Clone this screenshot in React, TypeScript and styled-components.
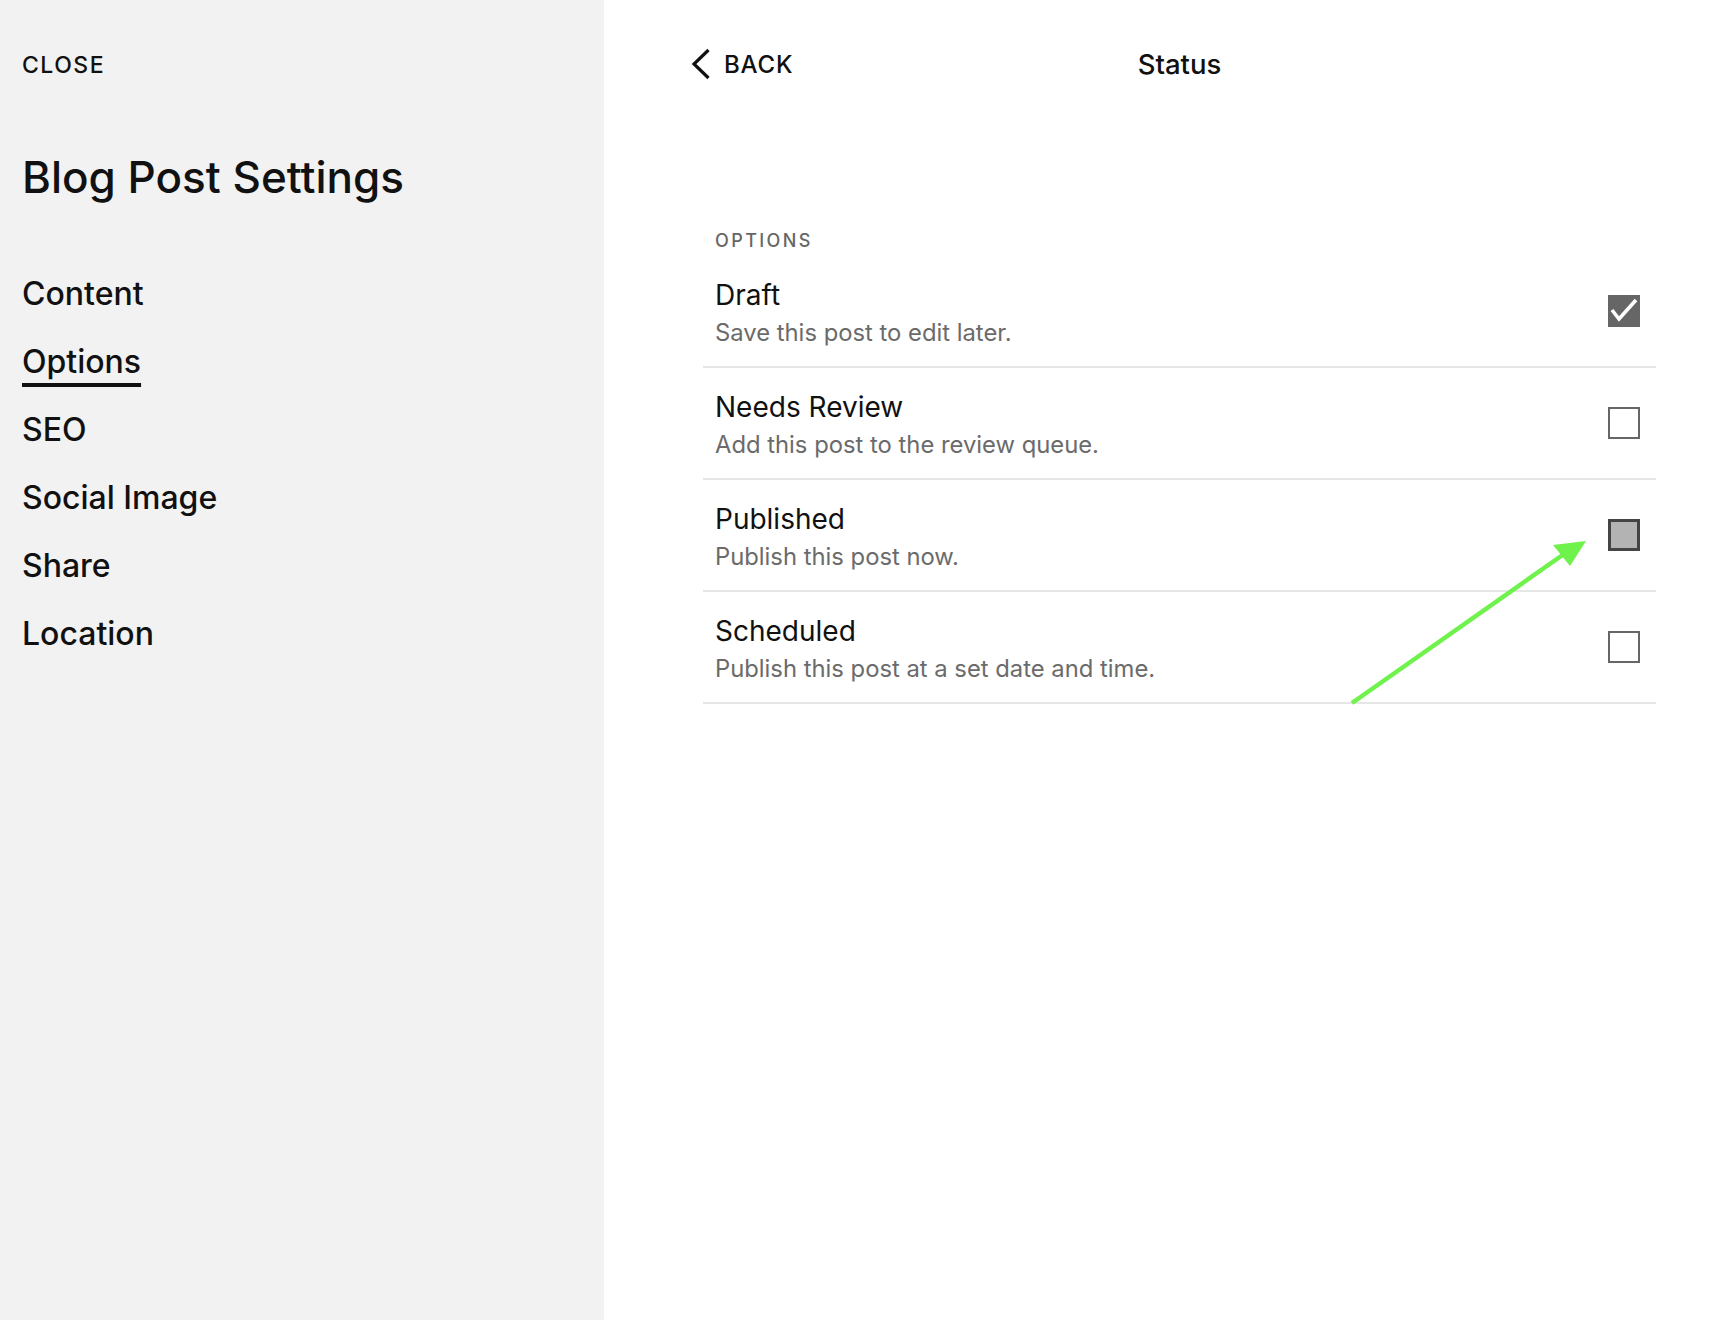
import React from "react";
import styled, { createGlobalStyle } from "styled-components";

const GlobalStyle = createGlobalStyle`
  html, body { margin: 0; padding: 0; background: #ffffff; }
  body { font-family: Inter, "Liberation Sans", Arial, sans-serif; color: #111111; -webkit-font-smoothing: antialiased; }
  * { box-sizing: border-box; }
`;

const Page = styled.div`
  display: flex;
  min-height: 1320px;
  width: 100%;
`;

const Sidebar = styled.aside`
  width: 604px;
  flex: 0 0 604px;
  background: #f2f2f2;
  padding: 54px 22px 0 22px;
  display: flex;
  flex-direction: column;
`;

const CloseLink = styled.div`
  font-size: 23px;
  line-height: 23px;
  font-weight: 500;
  letter-spacing: 1.5px;
  color: #111;
`;

const SidebarTitle = styled.h1`
  margin: 78px 0 0 0;
  font-size: 44px;
  line-height: 44px;
  font-weight: 500;
  letter-spacing: 0;
  color: #111;
`;

const Nav = styled.nav`
  margin-top: 77px;
  display: flex;
  flex-direction: column;
  align-items: flex-start;
  gap: 32px;
`;

const NavItem = styled.div<{ $active?: boolean }>`
  font-size: 32px;
  line-height: 36px;
  font-weight: 500;
  color: #111;
  text-decoration: ${(p) => (p.$active ? "underline" : "none")};
  text-decoration-thickness: 4px;
  text-underline-offset: 10px;
`;

const Main = styled.main`
  position: relative;
  flex: 1;
  background: #fff;
  display: flex;
  flex-direction: column;
`;

const Header = styled.header`
  display: grid;
  grid-template-columns: 1fr auto 1fr;
  align-items: center;
  height: 40px;
  margin-top: 44px;
  padding: 0 42px 0 87px;
`;

const BackButton = styled.div`
  display: flex;
  align-items: center;
  gap: 13px;
  font-size: 24px;
  font-weight: 500;
  letter-spacing: 0.8px;
  color: #111;
`;

const HeaderTitle = styled.div`
  font-size: 27.5px;
  font-weight: 500;
  color: #111;
`;

const Content = styled.section`
  padding: 147px 54px 0 99px;
  display: flex;
  flex-direction: column;
`;

const SectionLabel = styled.div`
  padding-left: 12px;
  font-size: 18px;
  line-height: 20px;
  font-weight: 500;
  letter-spacing: 2.4px;
  color: #666;
  margin-bottom: 5px;
`;

const Row = styled.div`
  display: flex;
  align-items: center;
  justify-content: space-between;
  height: 112px;
  padding: 0 16px 0 12px;
  border-bottom: 2px solid #e6e6e6;
`;

const RowText = styled.div`
  display: flex;
  flex-direction: column;
  gap: 6px;
  padding-top: 4px;
`;

const RowTitle = styled.div`
  font-size: 28px;
  line-height: 34px;
  font-weight: 400;
  color: #111;
`;

const RowDesc = styled.div`
  font-size: 23.8px;
  line-height: 30px;
  font-weight: 400;
  color: #6b6b6b;
`;

type BoxState = "checked" | "empty" | "pressed";

const Box = styled.div<{ $state: BoxState }>`
  width: 32px;
  height: 32px;
  flex: 0 0 32px;
  display: flex;
  align-items: center;
  justify-content: center;
  background: ${(p) =>
    p.$state === "checked" ? "#666666" : p.$state === "pressed" ? "#b3b3b3" : "#ffffff"};
  border: ${(p) =>
    p.$state === "checked"
      ? "none"
      : p.$state === "pressed"
      ? "3px solid #444444"
      : "2px solid #666666"};
`;

const ArrowOverlay = styled.svg`
  position: absolute;
  left: 736px;
  top: 530px;
  pointer-events: none;
`;

const Chevron = () => (
  <svg width="20" height="32" viewBox="0 0 20 32" fill="none">
    <path d="M17.5 2 L3 16 L17.5 30" stroke="#111" strokeWidth="3.2" strokeLinecap="butt" strokeLinejoin="miter" />
  </svg>
);

const Check = () => (
  <svg width="32" height="32" viewBox="0 0 32 32" fill="none">
    <path d="M4 15 L11 24 L28 5" stroke="#fff" strokeWidth="3.6" strokeLinecap="butt" strokeLinejoin="miter" />
  </svg>
);

const options: { title: string; desc: string; state: BoxState }[] = [
  { title: "Draft", desc: "Save this post to edit later.", state: "checked" },
  { title: "Needs Review", desc: "Add this post to the review queue.", state: "empty" },
  { title: "Published", desc: "Publish this post now.", state: "pressed" },
  { title: "Scheduled", desc: "Publish this post at a set date and time.", state: "empty" },
];

const navItems = ["Content", "Options", "SEO", "Social Image", "Share", "Location"];

export default function App() {
  return (
    <>
      <GlobalStyle />
      <Page>
        <Sidebar>
          <CloseLink>CLOSE</CloseLink>
          <SidebarTitle>Blog Post Settings</SidebarTitle>
          <Nav>
            {navItems.map((n) => (
              <NavItem key={n} $active={n === "Options"}>
                {n}
              </NavItem>
            ))}
          </Nav>
        </Sidebar>
        <Main>
          <Header>
            <BackButton>
              <Chevron />
              BACK
            </BackButton>
            <HeaderTitle>Status</HeaderTitle>
            <div />
          </Header>
          <Content>
            <SectionLabel>OPTIONS</SectionLabel>
            {options.map((o) => (
              <Row key={o.title}>
                <RowText>
                  <RowTitle>{o.title}</RowTitle>
                  <RowDesc>{o.desc}</RowDesc>
                </RowText>
                <Box $state={o.state}>{o.state === "checked" && <Check />}</Box>
              </Row>
            ))}
          </Content>
          <ArrowOverlay width="260" height="185" viewBox="0 0 260 185">
            <line x1="12" y1="173" x2="224" y2="24" stroke="#6ff24b" strokeWidth="4.5" />
            <polygon points="246,11 213,15 230,36" fill="#6ff24b" />
          </ArrowOverlay>
        </Main>
      </Page>
    </>
  );
}
